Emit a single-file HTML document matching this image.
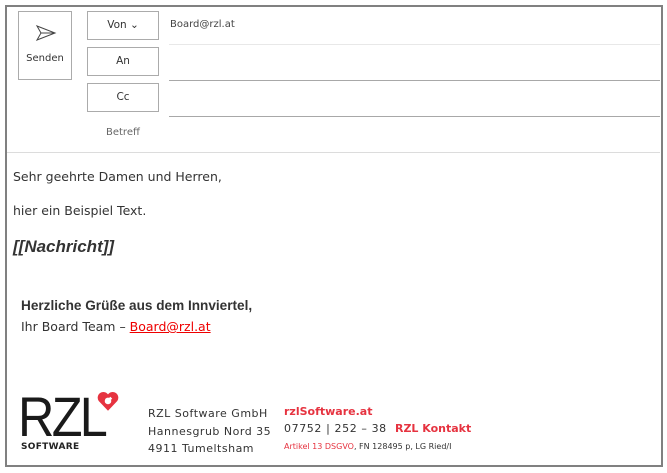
<!DOCTYPE html>
<html><head><meta charset="utf-8"><style>
*{margin:0;padding:0;box-sizing:border-box}
body{width:667px;height:473px;background:#fff;position:relative;overflow:hidden;font-family:"DejaVu Sans","Liberation Sans",sans-serif;color:#333}
.a{position:absolute;white-space:nowrap}
.frame{position:absolute;left:5px;top:5px;width:658px;height:462px;border:2px solid #808080}
.box{position:absolute;border:1px solid #ababab;background:#fff;font-size:10.5px;color:#333;text-align:center}
.line{position:absolute;height:1px}
</style></head><body>
<div class="frame"></div>
<div class="box" style="left:18px;top:11px;width:54px;height:69px">
<svg style="position:absolute;left:16px;top:13px" width="22" height="16" viewBox="0 0 22 16"><path d="M2 1 L20 8 L2 15 L6 8 Z M6 8 H20" fill="none" stroke="#444" stroke-width="1"/></svg>
<div class="a" style="left:0;right:0;top:41px;font-size:10px">Senden</div></div>
<div class="box" style="left:87px;top:11px;width:72px;height:29px;line-height:27px">Von &#8964;</div>
<div class="box" style="left:87px;top:47px;width:72px;height:29px;line-height:27px">An</div>
<div class="box" style="left:87px;top:83px;width:72px;height:29px;line-height:27px">Cc</div>
<div class="a" style="left:106px;top:127px;font-size:10px;color:#666">Betreff</div>
<div class="a" style="left:170px;top:19px;font-size:10px;color:#444">Board@rzl.at</div>
<div class="line" style="left:169px;top:44px;width:491px;background:#e8e8e8"></div>
<div class="line" style="left:169px;top:80px;width:491px;background:#a8a8a8"></div>
<div class="line" style="left:169px;top:116px;width:491px;background:#a8a8a8"></div>
<div class="line" style="left:7px;top:152px;width:653px;background:#dcdcdc"></div>
<div class="a" style="left:13px;top:169px;font-size:12.5px">Sehr geehrte Damen und Herren,</div>
<div class="a" style="left:13px;top:203px;font-size:12.5px">hier ein Beispiel Text.</div>
<div class="a" style="left:13px;top:237px;font-size:17px;font-weight:bold;font-style:italic;font-family:'Liberation Sans',sans-serif">[[Nachricht]]</div>
<div class="a" style="left:21px;top:298px;font-size:13.6px;font-weight:bold;font-family:'Liberation Sans',sans-serif">Herzliche Grüße aus dem Innviertel,</div>
<div class="a" style="left:21px;top:319px;font-size:12.5px">Ihr Board Team – <span style="color:#e00;text-decoration:underline">Board@rzl.at</span></div>
<div class="a" style="left:18px;top:384px;font-size:56px;font-family:'Liberation Sans',sans-serif;color:#1a1a1a;letter-spacing:-3px;transform:scaleX(0.9);transform-origin:left">RZL</div>
<svg class="a" style="left:96px;top:391px" width="24" height="21" viewBox="0 0 22 19"><path d="M11 18 L2.5 9 A5 5 0 0 1 11 3 A5 5 0 0 1 19.5 9 Z" fill="#e63340"/><circle cx="11" cy="9" r="3" fill="#fff"/><path d="M11 9 L14 6" stroke="#fff" stroke-width="2.5"/></svg>
<div class="a" style="left:21px;top:442px;font-size:9px;font-weight:bold;color:#222;letter-spacing:0.3px">SOFTWARE</div>
<div class="a" style="left:148px;top:405px;font-size:11px;line-height:17.5px;letter-spacing:0.5px;color:#333">RZL Software GmbH<br>Hannesgrub Nord 35<br>4911 Tumeltsham</div>
<div class="a" style="left:284px;top:405px;font-size:11px;font-weight:bold;color:#e63340">rzlSoftware.at</div>
<div class="a" style="left:284px;top:422px;font-size:11px;letter-spacing:0.6px;color:#333">07752 | 252 – 38 &nbsp;<b style="color:#e63340;letter-spacing:0">RZL Kontakt</b></div>
<div class="a" style="left:284px;top:442px;font-size:8px;color:#333"><span style="color:#e63340">Artikel 13 DSGVO</span>, FN 128495 p, LG Ried/I</div>
</body></html>
